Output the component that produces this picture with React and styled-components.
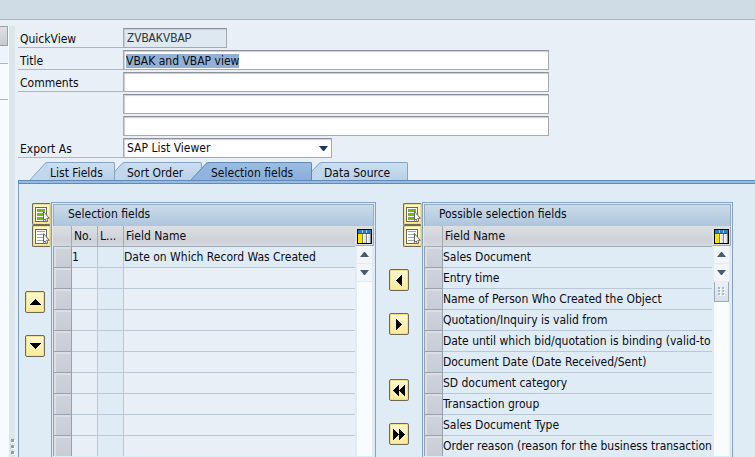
import React, { useEffect, useRef, useState } from "react";
import styled, { createGlobalStyle, css } from "styled-components";

const GlobalStyle = createGlobalStyle`
  *, *::before, *::after { box-sizing: border-box; }
  body { margin: 0; overflow: hidden; }
  body, button, input, select, table {
    font-family: "DejaVu Sans Condensed", "Noto Sans", sans-serif;
    font-size: 12px;
    color: #0b0b14;
  }
`;

const Page = styled.div`
  display: flex;
  flex-direction: column;
  height: 100vh;
  background: #e8eff6;
`;

const AppBar = styled.header`
  flex: none;
  height: 20px;
  background: #cfdce6;
  border-bottom: 1px solid #a3b5c8;
`;

const Workspace = styled.div`
  flex: 1;
  min-height: 0;
  display: grid;
  grid-template-columns: 9px 6px minmax(0, 1fr);
`;

const Navigator = styled.aside`
  display: flex;
  flex-direction: column;
  margin-top: 6px;
  background: #f7fbff;
`;

const NavHeader = styled.div`
  height: 20px;
  margin-right: 1px;
  border: solid #9c9fa6;
  border-width: 1px 1px 1px 0;
  background: linear-gradient(#dfe1e4, #c6cad0);
`;

const NavRow = styled.div`
  height: ${(p) => (p.$tall ? 36 : 18)}px;
  margin-right: 1px;
  border-bottom: 1px solid #a3b8cc;
  background: ${(p) => (p.$tall ? "#f7fbff" : "#edf4fc")};
`;

const Splitter = styled.div`
  display: flex;
  flex-direction: column;
  justify-content: flex-end;
  align-items: center;
  gap: 3px;
  margin-top: 6px;
  padding-bottom: 3px;
  background: #dbe5ea;
`;

const Grip = styled.span`
  width: 3px;
  height: 3px;
  background: #8d9bab;
  box-shadow: 1px 1px 0 #ffffff;
`;

const Main = styled.main`
  display: flex;
  flex-direction: column;
  min-width: 0;
  min-height: 0;
  padding: 8px 0 0 3px;
`;

const Form = styled.form`
  display: flex;
  flex-direction: column;
  gap: 2px;
  margin-bottom: 4px;
`;

const FormRow = styled.div`
  display: flex;
  height: 20px;
`;

const Label = styled.label`
  flex: none;
  width: 105px;
  padding-left: 2px;
  line-height: 22px;
  border-bottom: 1px solid ${(p) => (p.$plain ? "transparent" : "#b2b6bb")};
`;

const field = css`
  height: 20px;
  margin: 0;
  border: 1px solid #a6a9ae;
  border-top-color: #8d9096;
  border-radius: 0;
  outline: none;
  background: #ffffff;
  box-shadow: inset 1px 1px 1px #c9ccd2;
`;

const TextField = styled.input`
  ${field}
  width: 100%;
  max-width: 426px;
  padding: 1px 2px 0;
  &::selection { background: #92b0d3; color: #0b0b14; }
`;

const CodeField = styled(TextField)`
  max-width: 104px;
  padding-left: 3px;
  background: #dde8f1;
  color: #33383c;
  font-family: "Liberation Mono", monospace;
`;

const SelectWrap = styled.div`
  display: grid;
  align-items: center;
  width: 209px;
  > * { grid-area: 1 / 1; }
  > svg { justify-self: end; margin-right: 4px; pointer-events: none; }
`;

const Select = styled.select`
  ${field}
  appearance: none;
  width: 100%;
  padding: 0 20px 0 3px;
`;

const Tabs = styled.div`
  display: flex;
  flex: none;
  height: 18px;
  padding-left: 12px;
`;

const Tab = styled.button`
  display: flex;
  position: relative;
  z-index: ${(p) => p.$layer};
  width: ${(p) => p.$width}px;
  height: 18px;
  margin: 0 0 0 ${(p) => -p.$overlap}px;
  padding: 0;
  border: 0;
  background: none;
  > svg { flex: none; }
`;

const TabFace = styled.span`
  flex: 1;
  padding-left: 2px;
  text-align: left;
  white-space: nowrap;
  line-height: 20px;
  height: 18px;
  color: #0b0b14;
  border: solid ${(p) => (p.$active ? "#6488b4" : "#85a3c4")};
  border-width: 1px 1px 0 0;
  border-radius: 0 2px 0 0;
  background: ${(p) =>
    p.$active ? "linear-gradient(#9abde2, #8aaeda)" : "linear-gradient(#cbdff0, #b9d0e7)"};
`;

const TabStrip = styled.div`
  flex: none;
  height: 4px;
  border: solid #5f8ab9;
  border-width: 1px 0 1px 1px;
  background: #96bae0;
`;

const Panel = styled.section`
  flex: 1;
  min-height: 0;
  display: flex;
  padding: 18px 22px 0 0;
  border-left: 1px solid #7f9fc4;
  background: #dfebf5;
`;

const ButtonColumn = styled.div`
  flex: none;
  display: flex;
  flex-direction: column;
  width: ${(p) => p.$width}px;
  padding-top: 1px;
`;

const ListButtons = styled.div`
  display: flex;
  flex-direction: column;
  align-items: flex-end;
`;

const MoveButtons = styled.div`
  display: flex;
  flex-direction: column;
  gap: 22px;
  margin-top: ${(p) => p.$top}px;
  margin-left: ${(p) => p.$left}px;
`;

const IconButton = styled.button`
  display: flex;
  align-items: center;
  justify-content: center;
  width: 20px;
  height: 22px;
  padding: 0;
  border: 1px solid #6b685c;
  border-radius: 2px;
  background: linear-gradient(#fff8d2, #fdea96);
  box-shadow: inset 0 0 0 1px #efdf8f;
`;

const ListButton = styled(IconButton)`
  width: 19px;
  border-right-color: #d8c890;
`;

const GridPanel = styled.div`
  flex: ${(p) => p.$weight} ${(p) => p.$weight} 0;
  min-width: 0;
  display: flex;
  flex-direction: column;
  padding: 1px;
  border: 1px solid #83a2c6;
  border-bottom: 0;
`;

const GridTitle = styled.h2`
  flex: none;
  height: 22px;
  margin: 0;
  padding-left: 14px;
  line-height: 19px;
  font-size: 12px;
  font-weight: normal;
  border: 1px solid #96abc4;
  border-bottom: 0;
  background: linear-gradient(#cbdce9, #adc5dd);
`;

const GridBody = styled.div`
  flex: 1;
  min-height: 0;
  display: flex;
`;

const TableClip = styled.div`
  flex: 1;
  min-width: 0;
  overflow: hidden;
`;

const Table = styled.table`
  width: 100%;
  table-layout: fixed;
  border-collapse: separate;
  border-spacing: 0;
`;

const Col = styled.col`
  width: ${(p) => (p.$width ? `${p.$width}px` : "auto")};
`;

const HeadCell = styled.th`
  height: 21px;
  padding: 0 0 0 2px;
  line-height: 20px;
  font-weight: normal;
  text-align: left;
  white-space: nowrap;
  overflow: hidden;
  border: solid #a2aab6;
  border-width: 0 1px 1px 0;
  background: linear-gradient(#dcdfe2, #ced1d8 70%, #d4dade);
  &:last-child { border-right: 0; }
`;

const RowHandle = styled.td`
  height: 21px;
  padding: 0;
  border: solid #98a1af;
  border-width: 0 1px 1px 1px;
  background: linear-gradient(#cfd3db, #c8ccd4);
  box-shadow: inset 1px 1px 0 1px #dbdfe4;
`;

const Cell = styled.td`
  height: 21px;
  padding: 0;
  line-height: 20px;
  white-space: nowrap;
  overflow: hidden;
  border: solid #bac8d6;
  border-width: 0 1px 1px 0;
  background: ${(p) => (p.$tinted ? "#dfebf5" : "#e8eff6")};
  &:last-child { border-right: 0; }
`;

const ScrollColumn = styled.div`
  flex: none;
  width: 19px;
  display: flex;
  flex-direction: column;
  align-items: center;
`;

const ConfigButton = styled.button`
  flex: none;
  display: flex;
  align-items: center;
  justify-content: center;
  width: 19px;
  height: 20px;
  padding: 0;
  border: 1px solid #a2aab6;
  border-top-color: #dcdfe2;
  border-left-color: #dcdfe2;
  background: #dcdfe2;
`;

const ScrollButton = styled.button`
  flex: none;
  display: flex;
  align-items: center;
  justify-content: center;
  width: 15px;
  height: 18px;
  padding: 0;
  border: 0;
  border-bottom: 1px solid #e2ebf4;
  background: #f2f6fb;
`;

const Track = styled.div`
  flex: 1;
  width: 15px;
  background: #f9fcfe;
`;

const Thumb = styled.div`
  display: flex;
  align-items: center;
  justify-content: center;
  height: 20px;
  border: 1px solid #9fa9b3;
  border-top: 0;
  background: linear-gradient(#eaf1f8, #d5e0ea);
`;

const arrowPoints = {
  up: ["0,6 5.5,0 11,6"],
  down: ["0,0 11,0 5.5,6"],
  left: ["6,0 6,11 0,5.5"],
  right: ["0,0 6,5.5 0,11"],
  first: ["6,0 6,11 0,5.5", "12,0 12,11 6,5.5"],
  last: ["0,0 6,5.5 0,11", "6,0 12,5.5 6,11"],
};

const arrowSize = {
  up: [11, 6],
  down: [11, 6],
  left: [6, 11],
  right: [6, 11],
  first: [12, 11],
  last: [12, 11],
};

function Arrow({ kind }) {
  const [w, h] = arrowSize[kind];
  return (
    <svg width={w} height={h} viewBox={`0 0 ${w} ${h}`} shapeRendering="crispEdges" aria-hidden="true">
      {arrowPoints[kind].map((points) => (
        <polygon key={points} points={points} fill="#000" />
      ))}
    </svg>
  );
}

function SmallTriangle({ up, color = "#4c5b6a" }) {
  return (
    <svg width="9" height="5" viewBox="0 0 9 5" aria-hidden="true">
      <path d={up ? "M0 5L4 0H5L9 5Z" : "M0 0H9L5 5H4Z"} fill={color} />
    </svg>
  );
}

function ListIcon({ filled }) {
  const rows = filled ? [3, 7, 11] : [3, 6, 9, 12];
  return (
    <svg width="17" height="17" viewBox="0 0 17 17" aria-hidden="true">
      <rect x="2.5" y="1.5" width="11" height="14" fill="#fff" stroke="#65656a" />
      {rows.map((y) => (
        <rect key={y} x="4" y={y} width="8" height={filled ? 3 : 1} fill={filled ? "#76b51b" : "#a5a5a5"} />
      ))}
      <path d="M10.5 5.5V14.5L12.2 13L13.4 15.8L14.8 15.2L13.8 12.3H16.3Z" fill="#fff" stroke="#66666c" />
    </svg>
  );
}

function ColumnsIcon() {
  return (
    <svg width="15" height="15" viewBox="0 0 15 15" shapeRendering="crispEdges" aria-hidden="true">
      <rect width="15" height="15" fill="#05070a" />
      <rect x="1" y="1" width="13" height="13" fill="#fff" />
      <rect x="1" y="1" width="13" height="4" fill="#2f7dbd" />
      <rect x="1" y="4" width="13" height="1" fill="#155f9e" />
      <rect x="5" y="1" width="1" height="3" fill="#9cc9ea" />
      <rect x="9" y="1" width="1" height="3" fill="#9cc9ea" />
      <rect x="1" y="5" width="4" height="9" fill="#ffe300" />
      <rect x="5" y="5" width="1" height="9" fill="#8f8438" />
      <rect x="7" y="6" width="2" height="8" fill="#dfe4ec" />
      <rect x="9" y="5" width="1" height="9" fill="#7d858e" />
      <rect x="11" y="6" width="2" height="8" fill="#dfe4ec" />
      <rect x="13" y="5" width="1" height="9" fill="#7d858e" />
    </svg>
  );
}

function ThumbGrip() {
  return (
    <svg width="7" height="9" viewBox="0 0 7 9" aria-hidden="true">
      {[0, 3, 6].map((y) =>
        [0, 4].map((x) => (
          <g key={`${x}-${y}`}>
            <rect x={x + 1} y={y + 1} width="2" height="2" fill="#fff" />
            <rect x={x} y={y} width="2" height="2" fill="#a9bccf" />
          </g>
        ))
      )}
    </svg>
  );
}

const tabs = [
  { name: "List Fields", width: 85, overlap: 0, layer: 2 },
  { name: "Sort Order", width: 95, overlap: 8, layer: 1 },
  { name: "Selection fields", width: 121, overlap: 11, layer: 3 },
  { name: "Data Source", width: 104, overlap: 8, layer: 1 },
];

function TabItem({ tab, active, onSelect }) {
  return (
    <Tab
      type="button"
      role="tab"
      aria-selected={active}
      $width={tab.width}
      $overlap={tab.overlap}
      $layer={active ? 3 : tab.layer}
      onClick={onSelect}
    >
      <svg width="18" height="18" viewBox="0 0 18 18" aria-hidden="true">
        <path d="M0 18L15 1.5Q16 .5 18 .5V18Z" fill={active ? "#91b4de" : "#c1d7eb"} />
        <path d="M0 18L15 1.5Q16 .5 18 .5" fill="none" stroke={active ? "#6488b4" : "#85a3c4"} />
      </svg>
      <TabFace $active={active}>{tab.name}</TabFace>
    </Tab>
  );
}

function SelectionButtons() {
  return (
    <ListButtons>
      <ListButton type="button" aria-label="Select all"><ListIcon filled /></ListButton>
      <ListButton type="button" aria-label="Deselect all"><ListIcon /></ListButton>
    </ListButtons>
  );
}

function MoveButton({ kind, label }) {
  return (
    <IconButton type="button" aria-label={label}>
      <Arrow kind={kind} />
    </IconButton>
  );
}

function FieldGrid({ title, weight, columns, rows, hasThumb }) {
  return (
    <GridPanel $weight={weight}>
      <GridTitle>{title}</GridTitle>
      <GridBody>
        <TableClip>
          <Table aria-label={title}>
            <colgroup>
              <Col $width={19} />
              {columns.map((c) => <Col key={c.name} $width={c.width} />)}
            </colgroup>
            <thead>
              <tr>
                <HeadCell />
                {columns.map((c) => <HeadCell key={c.name}>{c.name}</HeadCell>)}
              </tr>
            </thead>
            <tbody>
              {rows.map((row, r) => (
                <tr key={r}>
                  <RowHandle />
                  {columns.map((c, i) => (
                    <Cell key={c.name} $tinted={row.some(Boolean) || c.tinted}>
                      {row[i]}
                    </Cell>
                  ))}
                </tr>
              ))}
            </tbody>
          </Table>
        </TableClip>
        <ScrollColumn>
          <ConfigButton type="button" aria-label="Configure columns"><ColumnsIcon /></ConfigButton>
          <ScrollButton type="button" aria-label="Scroll up"><SmallTriangle up /></ScrollButton>
          <ScrollButton type="button" aria-label="Scroll down"><SmallTriangle /></ScrollButton>
          <Track>{hasThumb && <Thumb><ThumbGrip /></Thumb>}</Track>
        </ScrollColumn>
      </GridBody>
    </GridPanel>
  );
}

const selectedColumns = [
  { name: "No.", width: 26 },
  { name: "L...", width: 26, tinted: true },
  { name: "Field Name" },
];

const selectedRows = [
  ["1", "", "Date on Which Record Was Created"],
  ...Array.from({ length: 9 }, () => ["", "", ""]),
];

const possibleRows = [
  "Sales Document",
  "Entry time",
  "Name of Person Who Created the Object",
  "Quotation/Inquiry is valid from",
  "Date until which bid/quotation is binding (valid-to",
  "Document Date (Date Received/Sent)",
  "SD document category",
  "Transaction group",
  "Sales Document Type",
  "Order reason (reason for the business transaction",
].map((name) => [name]);

export default function App() {
  const titleRef = useRef(null);
  const [activeTab, setActiveTab] = useState("Selection fields");

  useEffect(() => {
    titleRef.current.focus();
    titleRef.current.select();
  }, []);

  return (
    <>
      <GlobalStyle />
      <Page>
        <AppBar />
        <Workspace>
          <Navigator>
            <NavHeader />
            <NavRow />
            <NavRow $tall />
          </Navigator>
          <Splitter><Grip /><Grip /><Grip /></Splitter>
          <Main>
            <Form>
              <FormRow>
                <Label htmlFor="quickview">QuickView</Label>
                <CodeField id="quickview" defaultValue="ZVBAKVBAP" readOnly />
              </FormRow>
              <FormRow>
                <Label htmlFor="title">Title</Label>
                <TextField id="title" ref={titleRef} defaultValue="VBAK and VBAP view" spellCheck={false} />
              </FormRow>
              <FormRow>
                <Label htmlFor="comment1">Comments</Label>
                <TextField id="comment1" />
              </FormRow>
              <FormRow>
                <Label htmlFor="comment2" aria-label="Comments line 2" $plain />
                <TextField id="comment2" />
              </FormRow>
              <FormRow>
                <Label htmlFor="comment3" aria-label="Comments line 3" $plain />
                <TextField id="comment3" />
              </FormRow>
              <FormRow>
                <Label htmlFor="export">Export As</Label>
                <SelectWrap>
                  <Select id="export" defaultValue="SAP List Viewer">
                    <option>SAP List Viewer</option>
                  </Select>
                  <SmallTriangle color="#1f3468" />
                </SelectWrap>
              </FormRow>
            </Form>
            <Tabs role="tablist">
              {tabs.map((tab) => (
                <TabItem
                  key={tab.name}
                  tab={tab}
                  active={tab.name === activeTab}
                  onSelect={() => setActiveTab(tab.name)}
                />
              ))}
            </Tabs>
            <TabStrip />
            <Panel>
              <ButtonColumn $width={32}>
                <SelectionButtons />
                <MoveButtons $top={44} $left={6}>
                  <MoveButton kind="up" label="Move up" />
                  <MoveButton kind="down" label="Move down" />
                </MoveButtons>
              </ButtonColumn>
              <FieldGrid title="Selection fields" weight={325} columns={selectedColumns} rows={selectedRows} />
              <ButtonColumn $width={46}>
                <SelectionButtons />
                <MoveButtons $top={22} $left={13}>
                  <MoveButton kind="left" label="Add field" />
                  <MoveButton kind="right" label="Remove field" />
                </MoveButtons>
                <MoveButtons $top={44} $left={13}>
                  <MoveButton kind="first" label="Add all fields" />
                  <MoveButton kind="last" label="Remove all fields" />
                </MoveButtons>
              </ButtonColumn>
              <FieldGrid
                title="Possible selection fields"
                weight={311}
                columns={[{ name: "Field Name" }]}
                rows={possibleRows}
                hasThumb
              />
            </Panel>
          </Main>
        </Workspace>
      </Page>
    </>
  );
}
